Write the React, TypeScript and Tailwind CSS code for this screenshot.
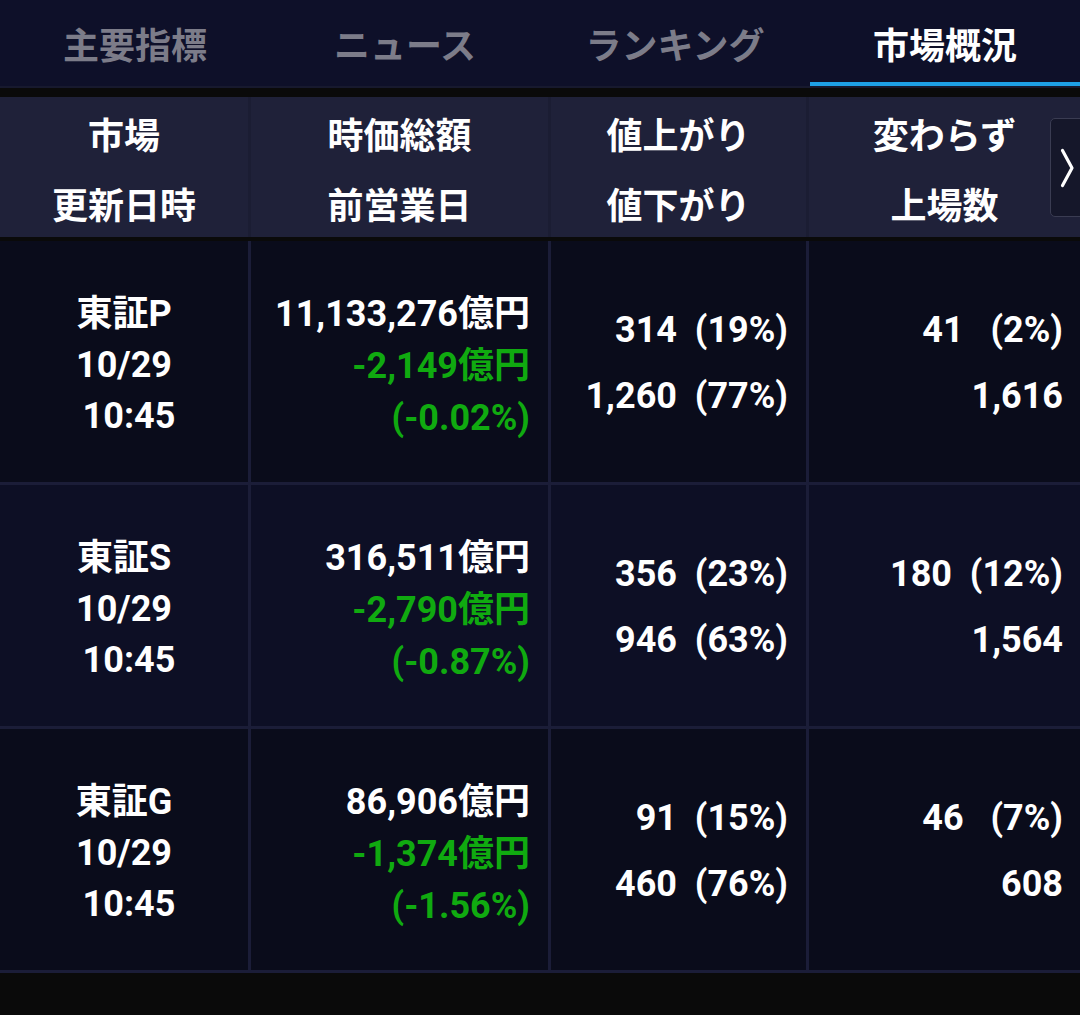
import React from "react";

type Market = {
  name: string;
  date: string;
  time: string;
  cap: string;
  diff: string;
  pct: string;
  up: string;
  down: string;
  flat: string;
  listed: string;
};

const tabs = ["主要指標", "ニュース", "ランキング", "市場概況"];

const markets: Market[] = [
  {
    name: "東証P",
    date: "10/29",
    time: "10:45",
    cap: "11,133,276億円",
    diff: "-2,149億円",
    pct: "(-0.02%)",
    up: "314  (19%)",
    down: "1,260  (77%)",
    flat: "41   (2%)",
    listed: "1,616",
  },
  {
    name: "東証S",
    date: "10/29",
    time: "10:45",
    cap: "316,511億円",
    diff: "-2,790億円",
    pct: "(-0.87%)",
    up: "356  (23%)",
    down: "946  (63%)",
    flat: "180  (12%)",
    listed: "1,564",
  },
  {
    name: "東証G",
    date: "10/29",
    time: "10:45",
    cap: "86,906億円",
    diff: "-1,374億円",
    pct: "(-1.56%)",
    up: "91  (15%)",
    down: "460  (76%)",
    flat: "46   (7%)",
    listed: "608",
  },
];

const font = { fontFamily: '"Roboto", "Noto Sans CJK JP", sans-serif' };

export default function App() {
  return (
    <div className="w-[1080px] h-[1015px] bg-[#0a0a0a] overflow-hidden font-bold" style={font}>
      {/* tabs */}
      <div className="flex h-[88px] bg-[#0e1029] border-b-2 border-[#17192e]">
        {tabs.map((t, i) => {
          const active = i === tabs.length - 1;
          return (
            <div
              key={t}
              className={
                "flex-1 flex items-center justify-center text-[36px] border-b-4 " +
                (active ? "text-white border-[#1ea0e6]" : "text-[#7c7c89] border-transparent")
              }
            >
              <span className="mt-[12px]">{t}</span>
            </div>
          );
        })}
      </div>

      {/* header row */}
      <div className="mt-[9px] flex h-[140px] bg-[#1f2139] text-white text-[36px] leading-[70px] relative">
        <div className="w-[251px] flex flex-col items-center justify-center pt-[9px] border-r-[3px] border-[#1b1d33]">
          <span>市場</span>
          <span>更新日時</span>
        </div>
        <div className="w-[300px] flex flex-col items-center justify-center pt-[9px] border-r-[3px] border-[#1b1d33]">
          <span>時価総額</span>
          <span>前営業日</span>
        </div>
        <div className="w-[258px] flex flex-col items-center justify-center pt-[9px] border-r-[3px] border-[#1b1d33]">
          <span>値上がり</span>
          <span>値下がり</span>
        </div>
        <div className="flex-1 flex flex-col items-center justify-center pt-[9px]">
          <span>変わらず</span>
          <span>上場数</span>
        </div>
        <div className="absolute left-[1050px] top-[21px] w-[44px] h-[99px] rounded-[5px] border border-[#3a3c52] bg-[#15172a] flex items-center pl-[9px]">
          <svg width="15" height="40" viewBox="0 0 15 40" fill="none">
            <path d="M2.5 2.5 L12 20 L2.5 37.5" stroke="#ffffff" strokeWidth="3.2" strokeLinecap="round" strokeLinejoin="round" />
          </svg>
        </div>
      </div>

      {/* data rows */}
      <div className="mt-[4px] text-white text-[36px]">
        {markets.map((m, i) => (
          <div
            key={m.name}
            className={
              "flex h-[244px] border-b-[3px] border-[#1b1d38] " +
              (i === 1 ? "bg-[#0d0f25]" : "bg-[#0a0c1b]")
            }
          >
            <div className="w-[251px] flex flex-col items-center justify-center pt-[8px] leading-[51px] border-r-[3px] border-[#1b1d38]">
              <span>{m.name}</span>
              <span>{m.date}</span>
              <span className="pl-[10px]">{m.time}</span>
            </div>
            <div className="w-[300px] flex flex-col items-end justify-center pt-[8px] leading-[52px] pr-[18px] border-r-[3px] border-[#1b1d38]">
              <span>{m.cap}</span>
              <span className="text-[#10aa10]">{m.diff}</span>
              <span className="text-[#10aa10]">{m.pct}</span>
            </div>
            <div className="w-[258px] flex flex-col items-end justify-center pt-[2px] leading-[66px] pr-[18px] border-r-[3px] border-[#1b1d38] whitespace-pre">
              <span>{m.up}</span>
              <span>{m.down}</span>
            </div>
            <div className="flex-1 flex flex-col items-end justify-center pt-[2px] leading-[66px] pr-[17px] whitespace-pre">
              <span>{m.flat}</span>
              <span>{m.listed}</span>
            </div>
          </div>
        ))}
      </div>
    </div>
  );
}
